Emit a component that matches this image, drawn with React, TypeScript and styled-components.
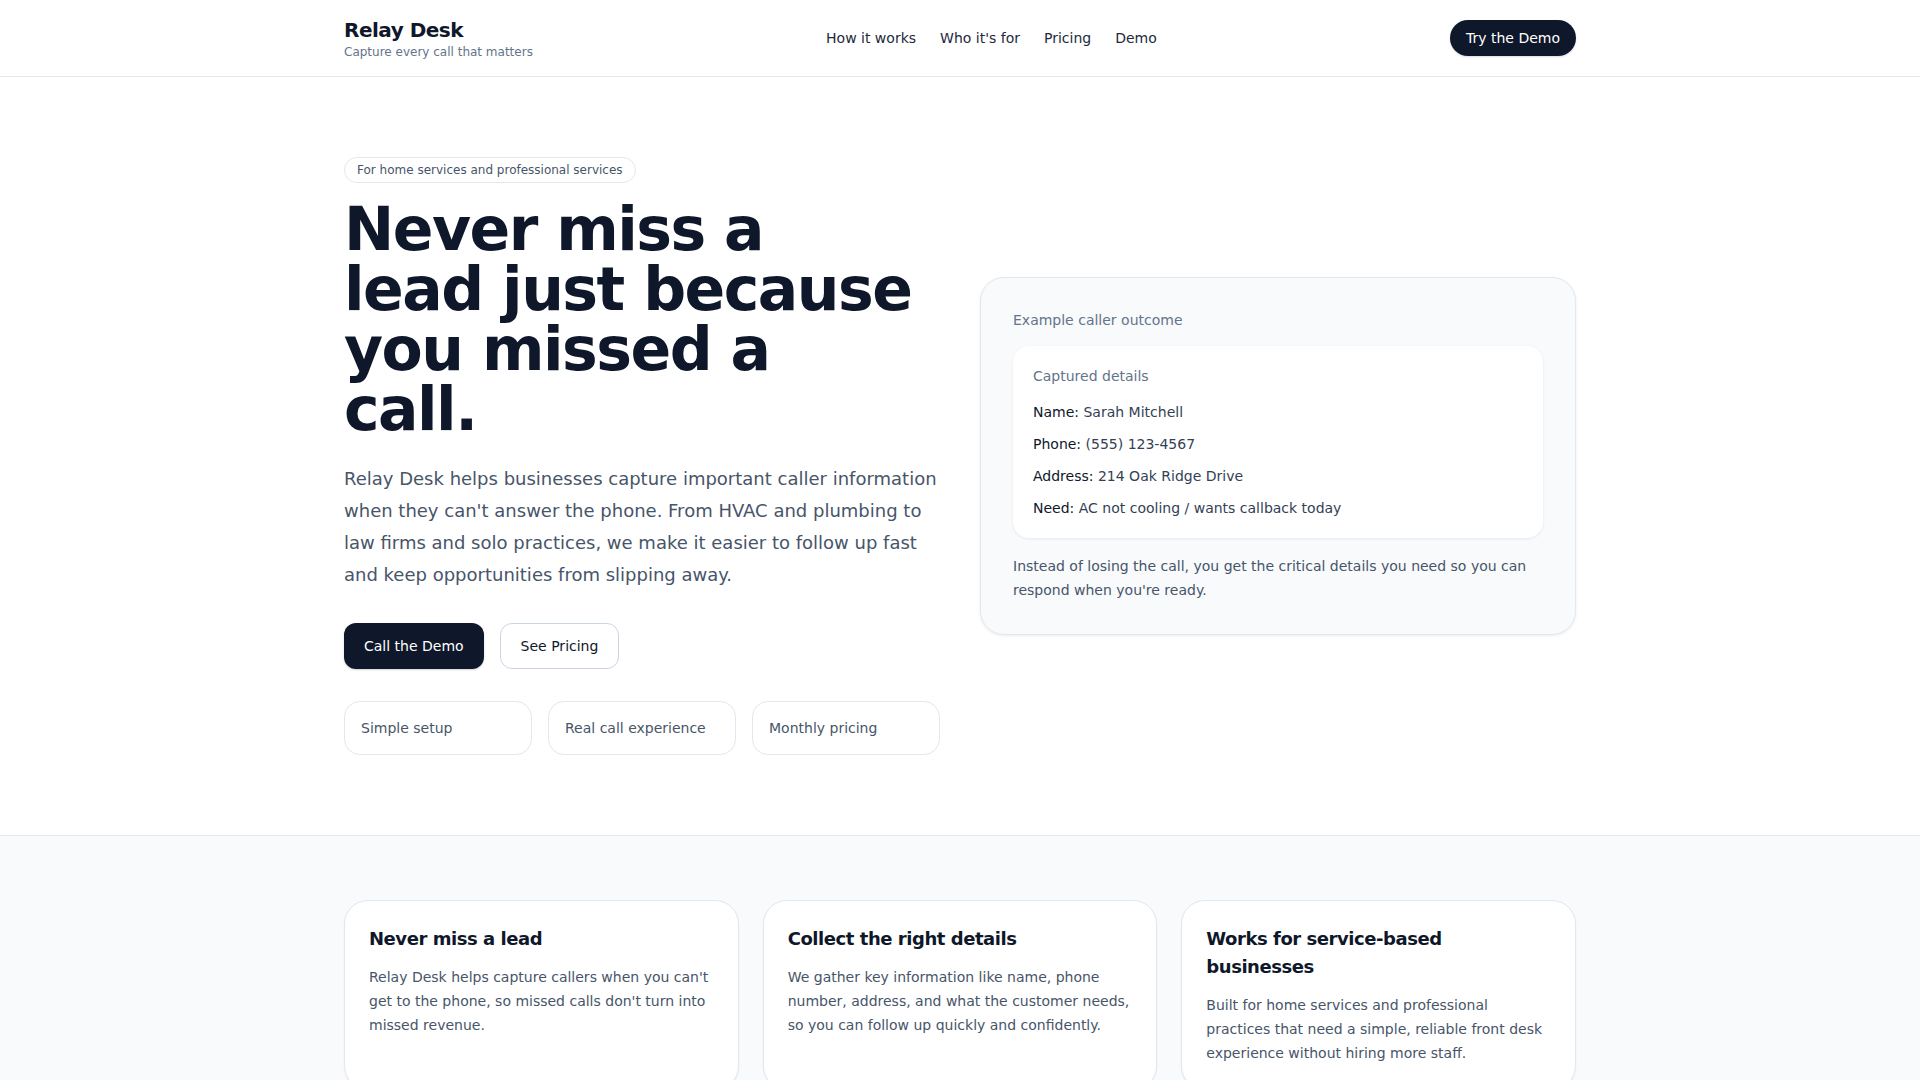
import React from 'react';
import styled, { createGlobalStyle } from 'styled-components';

const GlobalStyle = createGlobalStyle`
  * {
    box-sizing: border-box;
  }

  body {
    margin: 0;
    font-family: "DejaVu Sans", "Liberation Sans", sans-serif;
    color: #0f172a;
    background: #ffffff;
  }
`;

const Container = styled.div`
  max-width: 1280px;
  margin: 0 auto;
  padding: 0 24px;
`;

// Header
const HeaderBar = styled.header`
  border-bottom: 1px solid #e2e8f0;
  background: #fff;
`;

const HeaderInner = styled(Container)`
  display: flex;
  align-items: center;
  justify-content: space-between;
  padding-top: 16px;
  padding-bottom: 16px;
`;

const Brand = styled.div`
  display: flex;
  flex-direction: column;
`;

const BrandName = styled.div`
  font-size: 20px;
  line-height: 28px;
  font-weight: 700;
  letter-spacing: -0.5px;
  color: #0f172a;
`;

const BrandTagline = styled.div`
  font-size: 12px;
  line-height: 16px;
  color: #64748b;
`;

const Nav = styled.nav`
  display: flex;
  gap: 24px;
`;

const NavLink = styled.a`
  font-size: 14px;
  line-height: 20px;
  color: #1e293b;
  text-decoration: none;
`;

const PillButton = styled.a`
  display: inline-block;
  padding: 8px 16px;
  border-radius: 999px;
  background: #0f172a;
  color: #fff;
  font-size: 14px;
  line-height: 20px;
  text-decoration: none;
  box-shadow: 0 1px 2px rgba(15, 23, 42, 0.15);
`;

// Hero
const Hero = styled.section`
  padding: 80px 0;
`;

const HeroGrid = styled(Container)`
  display: grid;
  grid-template-columns: 1fr 1fr;
  gap: 40px;
  align-items: center;
`;

const HeroCopy = styled.div`
  display: flex;
  flex-direction: column;
  align-items: flex-start;
`;

const Badge = styled.span`
  display: inline-block;
  padding: 4px 12px;
  border: 1px solid #e2e8f0;
  border-radius: 999px;
  font-size: 12px;
  line-height: 16px;
  color: #475569;
`;

const Headline = styled.h1`
  margin: 16px 0 0;
  max-width: 576px;
  font-size: 60px;
  line-height: 60px;
  font-weight: 700;
  letter-spacing: -1.5px;
  color: #0f172a;
`;

const Lead = styled.p`
  margin: 24px 0 0;
  font-size: 18px;
  line-height: 32px;
  color: #475569;
`;

const Actions = styled.div`
  display: flex;
  gap: 16px;
  margin-top: 32px;
`;

const ActionButton = styled.a<{ $primary?: boolean }>`
  display: inline-block;
  padding: ${(p) => (p.$primary ? '13px 20px' : '12px 20px')};
  border-radius: 12px;
  border: ${(p) => (p.$primary ? 'none' : '1px solid #cbd5e1')};
  background: ${(p) => (p.$primary ? '#0f172a' : '#fff')};
  color: ${(p) => (p.$primary ? '#fff' : '#0f172a')};
  font-size: 14px;
  line-height: 20px;
  text-decoration: none;
  box-shadow: ${(p) => (p.$primary ? '0 1px 2px rgba(15, 23, 42, 0.2)' : 'none')};
`;

const Highlights = styled.div`
  display: grid;
  grid-template-columns: repeat(3, 1fr);
  gap: 16px;
  width: 100%;
  margin-top: 32px;
`;

const Highlight = styled.div`
  padding: 16px;
  border: 1px solid #e2e8f0;
  border-radius: 16px;
  font-size: 14px;
  line-height: 20px;
  color: #475569;
`;

const OutcomeCard = styled.div`
  padding: 32px;
  border: 1px solid #e2e8f0;
  border-radius: 24px;
  background: #f8fafc;
  box-shadow: 0 1px 3px rgba(15, 23, 42, 0.08);
`;

const MutedLabel = styled.div`
  font-size: 14px;
  line-height: 20px;
  color: #64748b;
`;

const DetailsCard = styled.div`
  margin-top: 16px;
  padding: 20px;
  border-radius: 16px;
  background: #fff;
  box-shadow: 0 1px 3px rgba(15, 23, 42, 0.08);
`;

const DetailList = styled.div`
  display: flex;
  flex-direction: column;
  gap: 12px;
  margin-top: 16px;
`;

const DetailRow = styled.div`
  font-size: 14px;
  line-height: 20px;
  color: #334155;

  strong {
    font-weight: 500;
    color: #0f172a;
  }
`;

const CardNote = styled.p`
  margin: 16px 0 0;
  font-size: 14px;
  line-height: 24px;
  color: #475569;
`;

// Features
const Features = styled.section`
  background: #f8fafc;
  border-top: 1px solid #e2e8f0;
  padding: 64px 0;
`;

const FeatureGrid = styled(Container)`
  display: grid;
  grid-template-columns: repeat(3, 1fr);
  gap: 24px;
`;

const FeatureCard = styled.div`
  padding: 24px;
  border: 1px solid #e2e8f0;
  border-radius: 24px;
  background: #fff;
  box-shadow: 0 1px 2px rgba(15, 23, 42, 0.05);
`;

const FeatureTitle = styled.h3`
  margin: 0;
  font-size: 18px;
  line-height: 28px;
  font-weight: 700;
  letter-spacing: -0.45px;
  color: #0f172a;
`;

const FeatureText = styled.p`
  margin: 12px 0 0;
  font-size: 14px;
  line-height: 24px;
  color: #475569;
`;

const details = [
  { label: 'Name:', value: 'Sarah Mitchell' },
  { label: 'Phone:', value: '(555) 123-4567' },
  { label: 'Address:', value: '214 Oak Ridge Drive' },
  { label: 'Need:', value: 'AC not cooling / wants callback today' },
];

const features = [
  {
    title: 'Never miss a lead',
    text: "Relay Desk helps capture callers when you can't get to the phone, so missed calls don't turn into missed revenue.",
  },
  {
    title: 'Collect the right details',
    text: 'We gather key information like name, phone number, address, and what the customer needs, so you can follow up quickly and confidently.',
  },
  {
    title: 'Works for service-based businesses',
    text: 'Built for home services and professional practices that need a simple, reliable front desk experience without hiring more staff.',
  },
];

const App: React.FC = () => {
  return (
    <>
      <GlobalStyle />
      <HeaderBar>
        <HeaderInner>
          <Brand>
            <BrandName>Relay Desk</BrandName>
            <BrandTagline>Capture every call that matters</BrandTagline>
          </Brand>
          <Nav>
            <NavLink href="#how">How it works</NavLink>
            <NavLink href="#who">Who it's for</NavLink>
            <NavLink href="#pricing">Pricing</NavLink>
            <NavLink href="#demo">Demo</NavLink>
          </Nav>
          <PillButton href="#demo">Try the Demo</PillButton>
        </HeaderInner>
      </HeaderBar>

      <Hero>
        <HeroGrid>
          <HeroCopy>
            <Badge>For home services and professional services</Badge>
            <Headline>Never miss a lead just because you missed a call.</Headline>
            <Lead>
              Relay Desk helps businesses capture important caller information when they can't
              answer the phone. From HVAC and plumbing to law firms and solo practices, we make it
              easier to follow up fast and keep opportunities from slipping away.
            </Lead>
            <Actions>
              <ActionButton $primary href="#demo">
                Call the Demo
              </ActionButton>
              <ActionButton href="#pricing">See Pricing</ActionButton>
            </Actions>
            <Highlights>
              <Highlight>Simple setup</Highlight>
              <Highlight>Real call experience</Highlight>
              <Highlight>Monthly pricing</Highlight>
            </Highlights>
          </HeroCopy>

          <OutcomeCard>
            <MutedLabel>Example caller outcome</MutedLabel>
            <DetailsCard>
              <MutedLabel>Captured details</MutedLabel>
              <DetailList>
                {details.map((d) => (
                  <DetailRow key={d.label}>
                    <strong>{d.label}</strong> {d.value}
                  </DetailRow>
                ))}
              </DetailList>
            </DetailsCard>
            <CardNote>
              Instead of losing the call, you get the critical details you need so you can respond
              when you're ready.
            </CardNote>
          </OutcomeCard>
        </HeroGrid>
      </Hero>

      <Features>
        <FeatureGrid>
          {features.map((f) => (
            <FeatureCard key={f.title}>
              <FeatureTitle>{f.title}</FeatureTitle>
              <FeatureText>{f.text}</FeatureText>
            </FeatureCard>
          ))}
        </FeatureGrid>
      </Features>
    </>
  );
};

export default App;
